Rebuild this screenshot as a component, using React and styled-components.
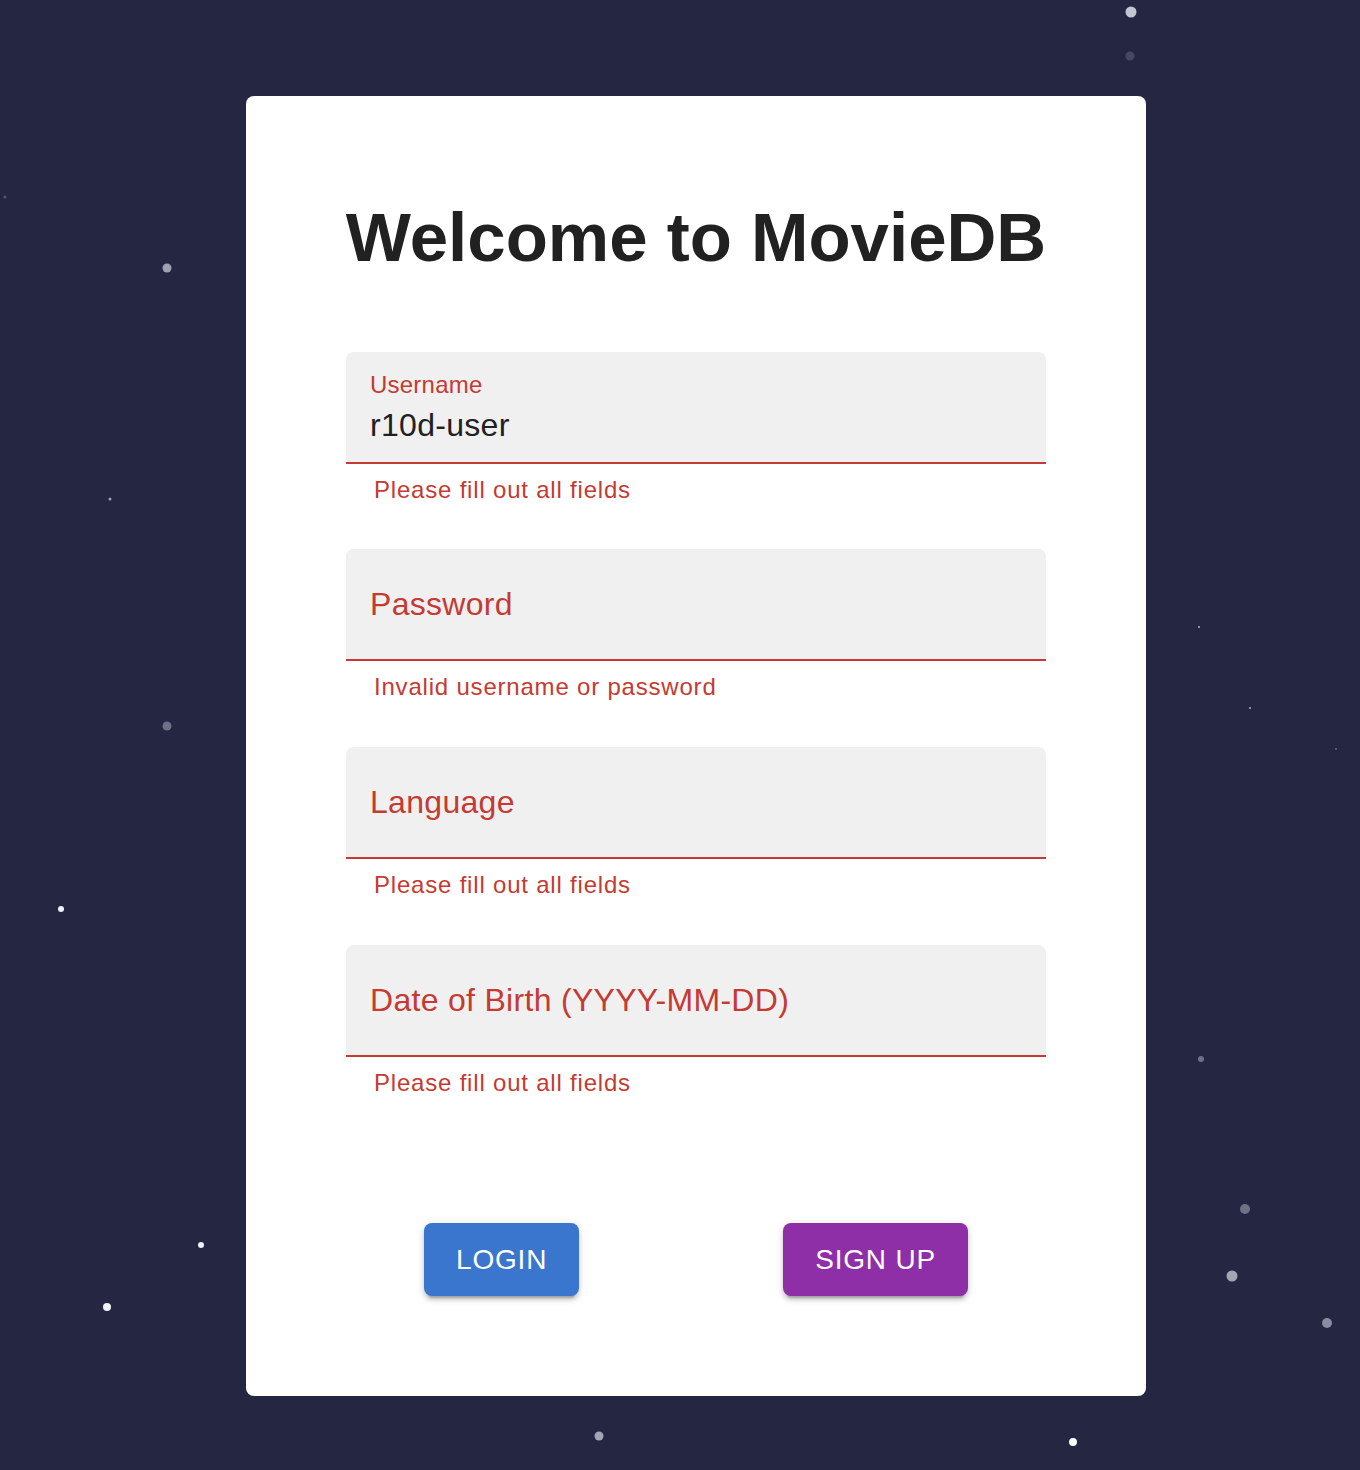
import React from 'react'
import styled, {createGlobalStyle} from 'styled-components'

const GlobalStyle = createGlobalStyle`
    html, body {
        margin: 0;
        padding: 0;
        background-color: #252742;
    }
    * {
        box-sizing: border-box;
    }
`

const red = '#c53a32'

const Page = styled.div`
    position: relative;
    min-height: 1470px;
    display: flex;
    justify-content: center;
    align-items: flex-start;
    padding: 96px 0 74px 32px;
    font-family: "Liberation Sans", Arial, Helvetica, sans-serif;
    overflow: hidden;
`

const Star = styled.span`
    position: absolute;
    border-radius: 50%;
    background-color: ${({$tone}) => $tone};
    width: ${({$size}) => $size}px;
    height: ${({$size}) => $size}px;
    transform: translate(-50%, -50%);
`

const Card = styled.div`
    position: relative;
    z-index: 1;
    width: 900px;
    background-color: #ffffff;
    border-radius: 8px;
    padding: 101px 100px 100px;
    display: flex;
    flex-direction: column;
    align-items: center;
`

const Title = styled.h1`
    margin: 0 0 73px;
    font-size: 69px;
    line-height: 81.6px;
    font-weight: 700;
    color: #212121;
    white-space: nowrap;
`

const Form = styled.form`
    width: 700px;
    display: flex;
    flex-direction: column;
    gap: 40px;
`

const FieldGroup = styled.div`
    display: flex;
    flex-direction: column;
`

const FieldBox = styled.div`
    height: 112px;
    background-color: #f0f0f0;
    border-radius: 8px 8px 0 0;
    border-bottom: 2px solid ${red};
    padding: 0 24px;
    display: flex;
    flex-direction: column;
`

const Label = styled.label`
    color: ${red};
    letter-spacing: 0.00938em;
    font-size: ${({$shrink}) => ($shrink ? '24px' : '32px')};
    line-height: ${({$shrink}) => ($shrink ? '35px' : '46px')};
    margin-top: ${({$shrink}) => ($shrink ? '15px' : '32px')};
`

const Value = styled.div`
    font-size: 32px;
    line-height: 46px;
    letter-spacing: 0.00938em;
    color: #212121;
`

const Helper = styled.p`
    margin: 6px 28px 0;
    font-size: 24px;
    line-height: 1.66;
    letter-spacing: 0.03333em;
    color: ${red};
`

const Actions = styled.div`
    width: 748px;
    margin-top: 120px;
    display: flex;
    justify-content: space-around;
`

const Button = styled.button`
    font-family: inherit;
    font-size: 28px;
    line-height: 49px;
    font-weight: 400;
    letter-spacing: 0.02857em;
    text-transform: uppercase;
    color: #ffffff;
    background-color: ${({$color}) => $color};
    border: none;
    border-radius: 8px;
    padding: 12px 32px;
    cursor: pointer;
    box-shadow: 0px 6px 2px -4px rgba(0,0,0,0.2), 0px 4px 4px 0px rgba(0,0,0,0.14), 0px 2px 10px 0px rgba(0,0,0,0.12);
`

const stars = [
    {x: 1131, y: 12, s: 11, c: '#c4c5d2'},
    {x: 1130, y: 56, s: 9, c: '#464862'},
    {x: 5, y: 197, s: 3, c: '#55576f'},
    {x: 167, y: 268, s: 9, c: '#9fa0b0'},
    {x: 110, y: 499, s: 3, c: '#9fa0b0'},
    {x: 1199, y: 627, s: 2, c: '#b0b1c0'},
    {x: 1250, y: 708, s: 2, c: '#b0b1c0'},
    {x: 1336, y: 749, s: 2, c: '#6a6c82'},
    {x: 167, y: 726, s: 9, c: '#6e7088'},
    {x: 61, y: 909, s: 6, c: '#f2f2f6'},
    {x: 1201, y: 1059, s: 6, c: '#6e7088'},
    {x: 1245, y: 1209, s: 10, c: '#6e7088'},
    {x: 1232, y: 1276, s: 11, c: '#a3a4b4'},
    {x: 201, y: 1245, s: 6, c: '#f2f2f6'},
    {x: 107, y: 1307, s: 8, c: '#f2f2f6'},
    {x: 1327, y: 1323, s: 10, c: '#8a8ca0'},
    {x: 599, y: 1436, s: 9, c: '#a3a4b4'},
    {x: 1073, y: 1442, s: 8, c: '#ffffff'},
]

const fields = [
    {label: 'Username', value: 'r10d-user', error: 'Please fill out all fields'},
    {label: 'Password', error: 'Invalid username or password'},
    {label: 'Language', error: 'Please fill out all fields'},
    {label: 'Date of Birth (YYYY-MM-DD)', error: 'Please fill out all fields'},
]

function App() {
  return (
    <Page>
        <GlobalStyle />
        {stars.map((st, i) => (
            <Star key={i} $size={st.s} $tone={st.c} style={{left: st.x, top: st.y}} />
        ))}
        <Card>
            <Title>Welcome to MovieDB</Title>
            <Form onSubmit={e => e.preventDefault()}>
                {fields.map(f => (
                    <FieldGroup key={f.label}>
                        <FieldBox>
                            <Label $shrink={!!f.value}>{f.label}</Label>
                            {f.value && <Value>{f.value}</Value>}
                        </FieldBox>
                        <Helper>{f.error}</Helper>
                    </FieldGroup>
                ))}
            </Form>
            <Actions>
                <Button $color='#3a76cd'>Login</Button>
                <Button $color='#8f2fa8'>Sign Up</Button>
            </Actions>
        </Card>
    </Page>
  )
}

export default App
